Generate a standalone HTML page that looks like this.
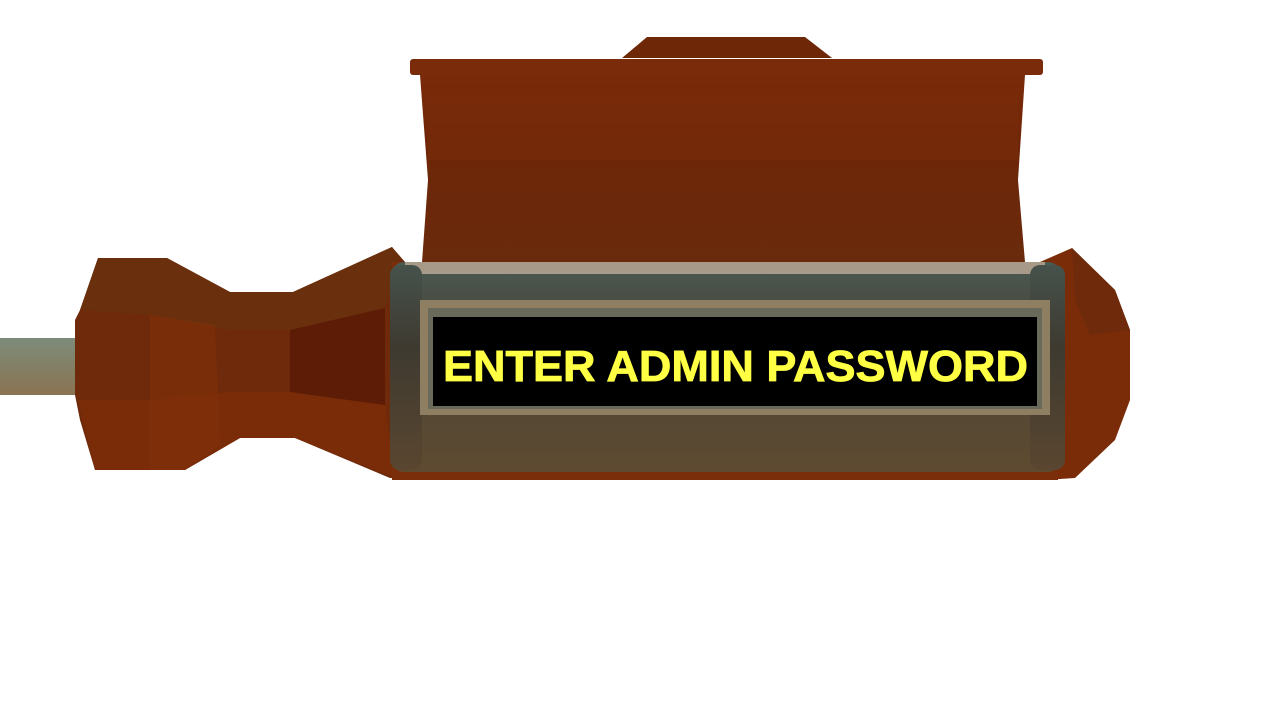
<!DOCTYPE html>
<html><head><style>body{margin:0;background:#fff;width:1280px;height:720px;overflow:hidden}</style></head><body>
<svg width="1280" height="720" viewBox="0 0 1280 720" xmlns="http://www.w3.org/2000/svg">
<defs>
<linearGradient id="sh" x1="0" y1="0" x2="0" y2="1"><stop offset="0" stop-color="#7d8c7a"/><stop offset="1" stop-color="#8a7352"/></linearGradient>
<linearGradient id="lid" x1="0" y1="0" x2="0" y2="1"><stop offset="0" stop-color="#7a2a08"/><stop offset="0.4" stop-color="#6e2608"/><stop offset="1" stop-color="#6a2a0c"/></linearGradient>
<linearGradient id="dev" x1="0" y1="0" x2="0" y2="1"><stop offset="0" stop-color="#4a5a52"/><stop offset="0.3" stop-color="#4a463c"/><stop offset="1" stop-color="#5e4a30"/></linearGradient>
<linearGradient id="cap" x1="0" y1="0" x2="0" y2="1"><stop offset="0" stop-color="#46524c"/><stop offset="0.4" stop-color="#3e3a30"/><stop offset="1" stop-color="#5a4630"/></linearGradient>
</defs>
<rect x="0" y="338" width="80" height="57" fill="url(#sh)"/>
<polygon points="98,258 167,258 230,292 293,292 392,247 405,262 405,478 390,478 295,438 240,438 185,470 95,470 80,420 75,395 75,320 80,310" fill="#6e2a0a"/>
<polygon points="80,310 98,258 167,258 230,292 293,292 392,247 400,258 385,308 290,330 230,330 150,315" fill="#6a300e"/>
<polygon points="78,400 150,400 230,392 290,392 385,405 395,478 295,438 240,438 185,470 95,470" fill="#7a2c08"/>
<polygon points="150,315 215,325 220,445 185,470 150,470" fill="#803008" opacity="0.6"/>
<polygon points="290,330 385,308 385,405 290,392" fill="#5c1c06"/>
<polygon points="622,58 647,37 805,37 832,58" fill="#6e2808"/>
<rect x="410" y="59" width="633" height="16" rx="3" fill="#7a2c0a"/>
<polygon points="420,75 1025,75 1018,180 1025,262 422,262 428,180" fill="url(#lid)"/>
<rect x="428" y="95" width="590" height="65" fill="#7a2c0a" opacity="0.5"/>
<polygon points="1040,262 1072,248 1115,290 1130,330 1130,400 1115,440 1075,478 1045,480" fill="#7a2c08"/>
<polygon points="1072,248 1115,290 1130,330 1090,335 1075,300" fill="#6e2a0a"/>
<rect x="392" y="262" width="666" height="218" fill="#7a2e0a"/>
<rect x="392" y="262" width="668" height="210" rx="12" fill="url(#dev)"/>
<rect x="405" y="262" width="640" height="12" fill="#a89a88"/>
<rect x="390" y="265" width="32" height="205" rx="10" fill="url(#cap)"/>
<rect x="1030" y="265" width="35" height="205" rx="10" fill="url(#cap)"/>
<rect x="420" y="300" width="630" height="115" fill="#8e7e62"/>
<rect x="428" y="308" width="614" height="101" fill="#6a6a5a"/>
<rect x="433" y="317" width="604" height="89" fill="#000"/>
<text x="443" y="381" font-family="'Comic Sans MS','Liberation Sans',sans-serif" font-size="44" font-weight="bold" fill="#ffff44" stroke="#ffff44" stroke-width="0.8" textLength="585" lengthAdjust="spacingAndGlyphs">ENTER ADMIN PASSWORD</text>
</svg>
</body></html>
